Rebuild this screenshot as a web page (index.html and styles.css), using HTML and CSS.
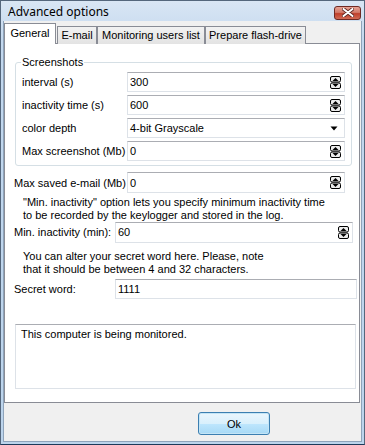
FILE: index.html
```html
<!DOCTYPE html>
<html lang="en">
<head>
  <meta charset="UTF-8">
  <title>Advanced options</title>
  <link rel="stylesheet" href="styles.css">
</head>
<body>
  <div class="window">
    <div class="titlebar">
      <span class="title">Advanced options</span>
      <button class="close-btn">
        <svg width="12" height="9" viewBox="0 0 12 9">
          <path d="M1.5 1 L10.5 8 M10.5 1 L1.5 8" stroke="#5a2420" stroke-width="3.6" stroke-linecap="round"/>
          <path d="M1.5 1 L10.5 8 M10.5 1 L1.5 8" stroke="#fff" stroke-width="2" stroke-linecap="round"/>
        </svg>
      </button>
    </div>

    <div class="client">
      <div class="tabs">
        <div class="tab active">General</div>
        <div class="tab">E-mail</div>
        <div class="tab">Monitoring users list</div>
        <div class="tab">Prepare flash-drive</div>
      </div>

      <div class="panel">
        <fieldset class="group">
          <legend>Screenshots</legend>
          <div class="row">
            <label class="label">interval (s)</label>
            <div class="edit spin">300</div>
          </div>
          <div class="row">
            <label class="label">inactivity time (s)</label>
            <div class="edit spin">600</div>
          </div>
          <div class="row">
            <label class="label">color depth</label>
            <div class="edit combo">4-bit Grayscale</div>
          </div>
          <div class="row">
            <label class="label">Max screenshot (Mb)</label>
            <div class="edit spin">0</div>
          </div>
        </fieldset>

        <div class="row outer mail-row">
          <label class="label mail-label">Max saved e-mail (Mb)</label>
          <div class="edit spin tall">0</div>
        </div>
        <p class="hint hint-first">"Min. inactivity" option lets you specify minimum inactivity time<br>to be recorded by the keylogger and stored in the log.</p>

        <div class="row outer">
          <label class="label short-label">Min. inactivity (min):</label>
          <div class="edit spin tall inactivity">60</div>
        </div>
        <p class="hint hint-second">You can alter your secret word here. Please, note<br>that it should be between 4 and 32 characters.</p>

        <div class="row outer secret-row">
          <label class="label short-label">Secret word:</label>
          <div class="edit secret">1111</div>
        </div>

        <div class="memo">This computer is being monitored.</div>
      </div>

      <div class="footer">
        <button class="ok-btn">Ok</button>
      </div>
    </div>
  </div>

  <script>
    // spin arrows and combo arrow are the same everywhere, add them once
    const spinIcon = '<svg class="spin-icon" width="11" height="13" viewBox="0 0 11 13">' +
      '<rect x="0.5" y="0.5" width="10" height="5.5" rx="1.5" fill="#ececec" stroke="#000"/>' +
      '<rect x="0.5" y="7" width="10" height="5.5" rx="1.5" fill="#ececec" stroke="#000"/>' +
      '<path d="M2.5 5h6L5.5 2z" fill="#000"/><path d="M2.5 8h6l-3 3z" fill="#000"/></svg>';
    const comboIcon = '<svg class="combo-icon" width="8" height="5" viewBox="0 0 8 5"><path d="M0.5 0.5h7L4 4.5z" fill="#000"/></svg>';

    document.querySelectorAll('.spin').forEach((el) => {
      el.insertAdjacentHTML('beforeend', spinIcon);
    });
    document.querySelectorAll('.combo').forEach((el) => {
      el.insertAdjacentHTML('beforeend', comboIcon);
    });
  </script>
</body>
</html>
```

FILE: styles.css
```css
* {
  box-sizing: border-box;
}
body {
  margin: 0;
  font-family: "Liberation Sans", Arial, sans-serif;
  font-size: 11px;
  color: #000;
}
.window {
  width: 365px;
  height: 445px;
  border: 1px solid #55677c;
  border-bottom-color: #1c3a5a;
  padding: 0 2px 2px;
  background: linear-gradient(#d9e6f4, #c3d8ee 40px, #bcd4ec);
  display: flex;
  flex-direction: column;
}
.titlebar {
  height: 20px;
  display: flex;
  align-items: center;
  padding: 0 1px 0 5px;
}
.title {
  font-family: "Noto Sans", "Open Sans", sans-serif;
  font-size: 12px;
  flex: 1;
  padding-top: 1px;
}
.close-btn {
  width: 27px;
  height: 14px;
  margin-top: 3px;
  padding: 0;
  border: 1px solid #6e2a24;
  border-radius: 3px;
  background: linear-gradient(#e7a394, #d27a6a 45%, #c0402c 55%, #d06a54);
  display: flex;
  align-items: center;
  justify-content: center;
}
.client {
  flex: 1;
  background: #f0f0f0;
  border: 1px solid #8ea3ba;
  border-top: none;
  display: flex;
  flex-direction: column;
}
.tabs {
  display: flex;
  align-items: flex-end;
  height: 23px;
  margin-bottom: -1px;
  position: relative;
  z-index: 1;
}
.tab {
  height: 18px;
  padding: 0;
  line-height: 17px;
  text-align: center;
  white-space: nowrap;
  border: 1px solid #898c95;
  border-bottom: none;
  background: linear-gradient(#f2f2f2, #e3e3e3);
}
.tab:nth-child(2) {
  width: 40px;
  margin-left: 1px;
}
.tab:nth-child(3) {
  width: 108px;
}
.tab:nth-child(4) {
  width: 101px;
}
.tab.active {
  height: 21px;
  width: 52px;
  line-height: 19px;
  background: #fff;
}
.panel {
  height: 360px;
  margin-right: 1px;
  border: 1px solid #898c95;
  background: #fff;
}
.group {
  margin: 12px 0 0 10px;
  width: 337px;
  padding: 3px 6px 4px;
  border: 1px solid #d5dfe5;
  border-radius: 3px;
}
.group legend {
  padding: 0 1px;
  margin-left: -1px;
  line-height: 13px;
}
.row {
  display: flex;
  align-items: center;
  height: 20px;
  margin-bottom: 3px;
}
.group .row:last-child {
  margin-bottom: 0;
}
.label {
  width: 105px;
  white-space: nowrap;
}
.outer {
  padding-left: 9px;
  margin-bottom: 0;
}
.mail-row {
  margin-top: 6px;
  height: 21px;
}
.mail-label {
  width: 113px;
}
.short-label {
  width: 101px;
}
.edit {
  width: 218px;
  height: 20px;
  border: 1px solid #dde2e8;
  border-top-color: #abadb3;
  padding: 0 2px;
  line-height: 18px;
  display: flex;
  align-items: center;
  justify-content: space-between;
}
.edit.tall {
  height: 21px;
}
.spin-icon {
  margin-right: 1px;
}
.combo-icon {
  margin-right: 4px;
}
.inactivity {
  width: 238px;
}
.secret {
  width: 242px;
}
.secret-row {
  margin-top: 3px;
}
.hint {
  margin: 3px 0 0;
  padding-left: 18px;
  line-height: 13px;
}
.hint-second {
  margin-top: 8px;
}
.memo {
  margin: 25px 0 0 10px;
  width: 341px;
  height: 65px;
  border: 1px solid #dde2e8;
  border-top-color: #abadb3;
  padding: 3px 5px;
}
.footer {
  display: flex;
  justify-content: flex-end;
  padding: 9px 91px 0 0;
}
.ok-btn {
  width: 72px;
  height: 23px;
  font-family: "Liberation Sans", Arial, sans-serif;
  font-size: 11px;
  color: #000;
  border: 1px solid #3c7fb1;
  border-radius: 3px;
  background: linear-gradient(#eaf6fd, #d9f0fc 50%, #bee6fd 51%, #a7d9f5);
  box-shadow: inset 0 0 0 1px #c4e5f6;
}
```
